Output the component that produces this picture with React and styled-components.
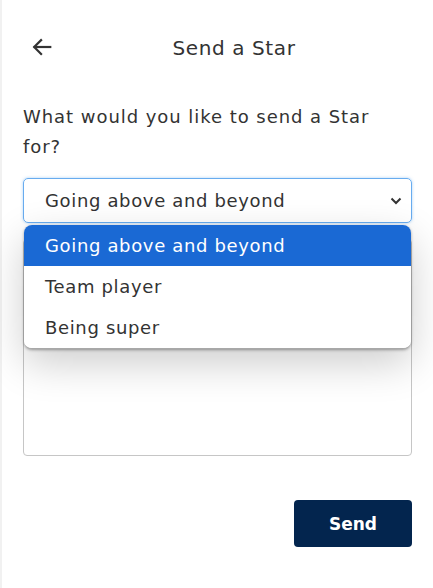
import { useState } from "react"
import styled, { createGlobalStyle } from "styled-components"

// "send a star" form, with the reason dropdown opened

const reasons = ["Going above and beyond", "Team player", "Being super"]

const GlobalStyle = createGlobalStyle`
  body {
    margin: 0;
    background: #fff;
    font-family: "DejaVu Sans", "Open Sans", sans-serif;
    color: #333;
  }
`

export default function App() {
  const [reason, setReason] = useState(reasons[0])
  const [open, setOpen] = useState(true)

  return (
    <Screen>
      <GlobalStyle />
      <Header>
        <BackButton aria-label="Back">
          <svg width="22" height="22" viewBox="0 0 24 24" fill="none" stroke="#333" strokeWidth="2.4" strokeLinecap="square">
            <path d="M21 12H4" />
            <path d="M11 4.5L3.5 12 11 19.5" />
          </svg>
        </BackButton>
        <Title>Send a Star</Title>
      </Header>

      <Question>What would you like to send a Star for?</Question>

      <SelectWrap>
        <SelectBox $focused={open} onClick={() => setOpen(!open)}>
          <span>{reason}</span>
          <svg width="12" height="8" viewBox="0 0 12 8" fill="none" stroke="#333" strokeWidth="2">
            <path d="M1.5 1.5L6 6l4.5-4.5" />
          </svg>
        </SelectBox>
        {open && (
          <Options>
            {reasons.map((item) => (
              <Option
                key={item}
                $active={item === reason}
                onClick={() => {
                  setReason(item)
                  setOpen(false)
                }}
              >
                {item}
              </Option>
            ))}
          </Options>
        )}
      </SelectWrap>

      <Message />

      <Footer>
        <SendButton>Send</SendButton>
      </Footer>
    </Screen>
  )
}

const Screen = styled.div`
  min-height: 588px;
  box-sizing: border-box;
  border-left: 2px solid #f1f1f1;
  padding: 26px 21px 0 21px;
  display: flex;
  flex-direction: column;
`

const Header = styled.div`
  position: relative;
  height: 44px;
  display: flex;
  align-items: center;
  justify-content: center;
`

const BackButton = styled.button`
  position: absolute;
  left: 8px;
  top: 10px;
  background: none;
  border: none;
  padding: 0;
  width: 22px;
  height: 22px;
  cursor: pointer;
`

const Title = styled.h1`
  margin: 0 0 0 33px;
  font-size: 20px;
  font-weight: 400;
  letter-spacing: 0.6px;
  color: #333;
`

const Question = styled.p`
  margin: 32px 0 0 0;
  max-width: 380px;
  font-size: 18px;
  line-height: 30px;
  letter-spacing: 0.95px;
  color: #333;
`

const SelectWrap = styled.div`
  position: relative;
  margin-top: 16px;
`

const SelectBox = styled.div`
  height: 45px;
  box-sizing: border-box;
  border: 1px solid ${(p) => (p.$focused ? "#68acef" : "#c8c8c8")};
  box-shadow: ${(p) => (p.$focused ? "0 0 3px rgba(80, 160, 240, 0.5)" : "none")};
  border-radius: 5px;
  padding: 0 9px 0 21px;
  display: flex;
  align-items: center;
  justify-content: space-between;
  font-size: 18px;
  letter-spacing: 0.65px;
  cursor: pointer;
`

const Options = styled.ul`
  position: absolute;
  top: 47px;
  left: 1px;
  right: 1px;
  margin: 0;
  padding: 0;
  list-style: none;
  background: #fff;
  border-radius: 8px;
  overflow: hidden;
  border-bottom: 1px solid #a8a8a8;
  box-shadow: 0 1px 3px rgba(0, 0, 0, 0.35), 0 14px 40px rgba(0, 0, 0, 0.2);
  z-index: 2;
`

const Option = styled.li`
  height: 41px;
  display: flex;
  align-items: center;
  padding-left: 21px;
  font-size: 18px;
  letter-spacing: 0.65px;
  color: ${(p) => (p.$active ? "#fff" : "#333")};
  background: ${(p) => (p.$active ? "#1a69d4" : "#fff")};
  cursor: pointer;
`

const Message = styled.div`
  margin-top: 16px;
  height: 217px;
  box-sizing: border-box;
  border: 1px solid #c6c6c6;
  border-radius: 4px;
`

const Footer = styled.div`
  display: flex;
  justify-content: flex-end;
  margin-top: 44px;
`

const SendButton = styled.button`
  width: 118px;
  height: 47px;
  border: none;
  border-radius: 4px;
  background: #03254e;
  color: #fff;
  font-family: "DejaVu Sans", "Open Sans", sans-serif;
  font-size: 17px;
  font-weight: 700;
  cursor: pointer;
`
